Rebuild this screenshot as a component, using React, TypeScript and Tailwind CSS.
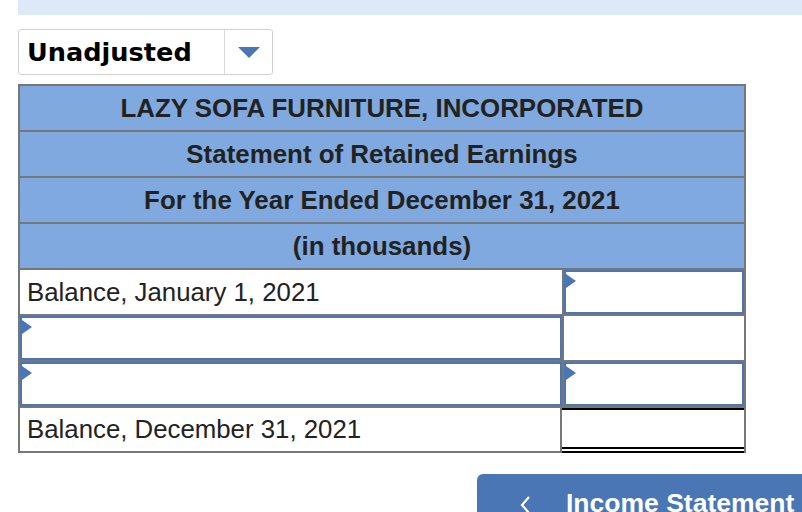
import React from "react";

const blue = "border-[#4a76b5]";

function Marker() {
  return (
    <span className="absolute left-0 top-[2px] w-0 h-0 border-y-[7px] border-y-transparent border-l-[10px] border-l-[#4a76b5]" />
  );
}

function InputCell() {
  return (
    <div className={`relative h-full w-full border-2 ${blue} bg-white`}>
      <Marker />
    </div>
  );
}

export default function App() {
  const headers = [
    "LAZY SOFA FURNITURE, INCORPORATED",
    "Statement of Retained Earnings",
    "For the Year Ended December 31, 2021",
    "(in thousands)",
  ];

  return (
    <div className="h-[512px] w-[802px] overflow-hidden bg-white font-['Liberation_Sans',Arial,sans-serif] text-[#222]">
      {/* top strip */}
      <div className="ml-[18px] h-[15px] bg-[#dde9f7]" />

      {/* Dropdown */}
      <div className="ml-[18px] mt-[14px] flex h-[46px] w-[255px] rounded-[3px] border border-[#cfcfcf]">
        <div className="flex flex-1 items-center border-r border-[#d9d9d9] pl-[8px] font-['DejaVu_Sans',Verdana,sans-serif] text-[25.6px] font-bold text-black">
          Unadjusted
        </div>
        <div className="flex w-[47px] items-center justify-center">
          <span className="h-0 w-0 border-x-[11px] border-x-transparent border-t-[11px] border-t-[#4a76b5]" />
        </div>
      </div>

      {/* Statement table */}
      <div className="ml-[18px] mt-[9px] w-[728px] border-2 border-[#777]">
        {headers.map((h) => (
          <div
            key={h}
            className="flex h-[46px] items-center justify-center border-b-2 border-[#777] bg-[#80aadf] text-[25.9px] font-bold"
          >
            {h}
          </div>
        ))}

        {/* Balance Jan 1 */}
        <div className="flex h-[46px] border-b-2 border-[#777]">
          <div className="flex flex-1 items-center border-r-2 border-[#777] pl-[7px] text-[25.8px]">
            Balance, January 1, 2021
          </div>
          <div className="w-[180px]">
            <InputCell />
          </div>
        </div>

        {/* blank line */}
        <div className="flex h-[46px] border-b-2 border-[#777]">
          <div className="flex-1 border-r-2 border-[#777]">
            <InputCell />
          </div>
          <div className="w-[180px]" />
        </div>

        {/* blank line with amount */}
        <div className="flex h-[46px] border-b-2 border-[#777]">
          <div className="flex-1 border-r-2 border-[#777]">
            <InputCell />
          </div>
          <div className="w-[180px]">
            <InputCell />
          </div>
        </div>

        {/* Balance Dec 31 */}
        <div className="flex h-[43px]">
          <div className="flex flex-1 items-center border-r-2 border-[#777] pl-[7px] text-[25.8px]">
            Balance, December 31, 2021
          </div>
          <div className="relative z-10 -mb-[2px] flex w-[182px] flex-col border-t-2 border-black bg-white">
            <div className="flex-1" />
            <div className="h-[6px] border-y-2 border-black" />
          </div>
        </div>
      </div>

      {/* Nav button */}
      <div className="ml-[477px] mt-[21px] flex h-[50px] w-[340px] items-start gap-[34px] rounded-tl-[6px] bg-[#4a76b5] pl-[41px] pt-[14px] text-white">
        <svg width="14" height="30" viewBox="0 0 14 30" className="mt-[1px]">
          <path d="M11 8 L4 16 L11 24" fill="none" stroke="white" strokeWidth="2.2" />
        </svg>
        <span className="text-[26.5px] font-bold leading-[30px]">Income Statement</span>
      </div>
    </div>
  );
}
